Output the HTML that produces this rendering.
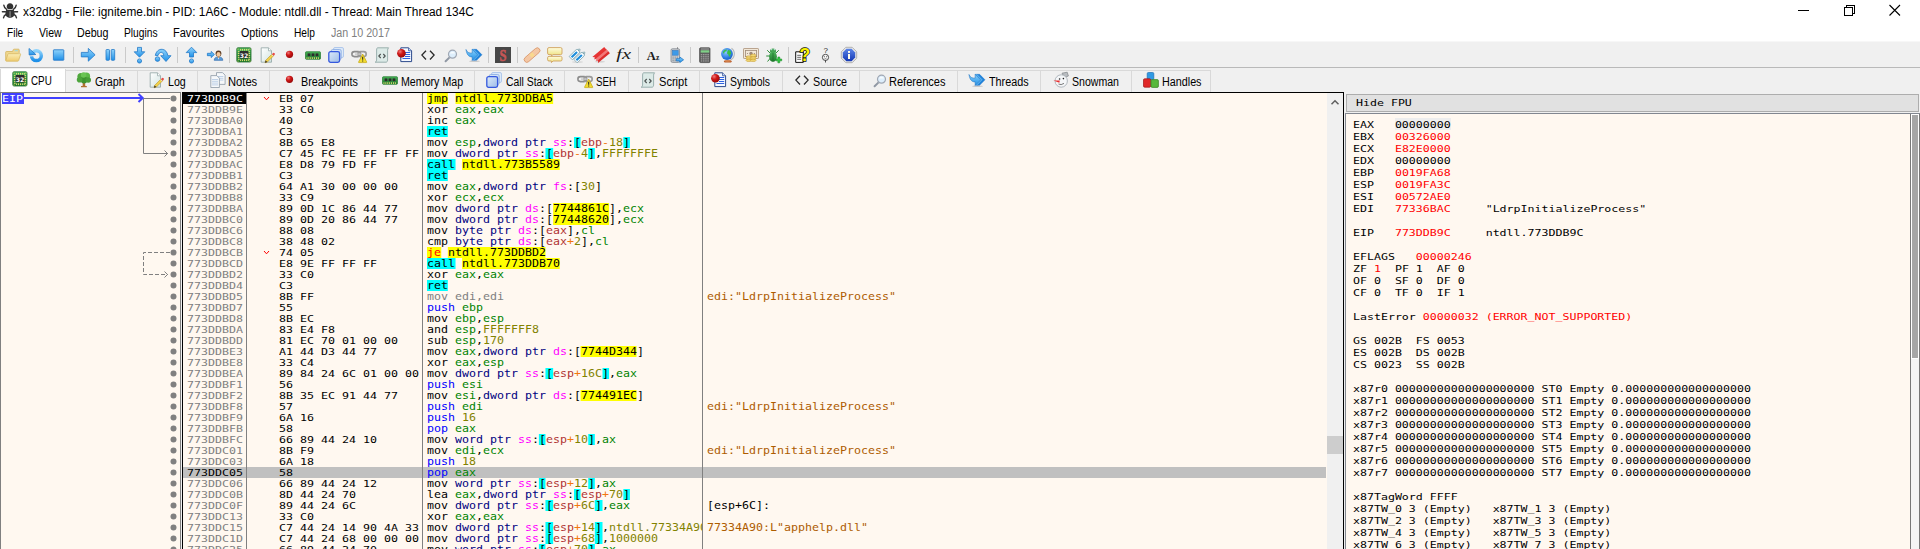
<!DOCTYPE html>
<html lang="en"><head><meta charset="utf-8"><title>x32dbg</title>
<style>
*{box-sizing:border-box}
html,body{margin:0;padding:0}
body{width:1920px;height:549px;overflow:hidden;position:relative;background:#F0F0F0;font-family:"Liberation Sans",sans-serif;font-size:12px;color:#000}
.abs,.u,.t,.ic{position:absolute}
.u{white-space:pre;line-height:14px;height:14px;transform-origin:0 0;font-size:12px}
.t{white-space:pre;font-family:"DejaVu Sans Mono","Liberation Mono",monospace;font-size:9.3px;line-height:11px;height:11px;transform-origin:0 0;transform:scaleX(1.25021)}
.tl{font-size:10.6px;transform:scaleX(1.09688)}
.tr{font-size:9.4px;transform:scaleX(1.23691)}
.t2{line-height:12px;height:12px}
.ic{overflow:visible}
.clip{position:absolute;overflow:hidden}
.g{color:#808080}.rd{color:#FF0000}
.pp{color:#0000FF}.cl{background:#00FFFF}.jm{background:#FFFF00}.jc{background:#FFFF00;color:#FF0000}
.r{color:#008300}.sz{color:#000080}.sg{color:#FF00FF}.bk{background:#00FFFF}
.br{color:#B03434}.op{color:#F27711}.v{color:#828200}.ad{background:#FFFF00}
.cm{color:#AE5C00}
.cl,.jm,.jc,.bk,.ad{display:inline-block;height:11px;line-height:11px;vertical-align:top}
</style></head><body>
<!-- chrome -->
<div class="abs" style="left:0px;top:0px;width:1920px;height:42px;background:#FFFFFF;"></div>
<div class="abs" style="left:0px;top:41px;width:1920px;height:1px;background:#F7F7F7;"></div>
<div class="u " style="left:23.00px;top:4.84px;transform:scaleX(0.9876);">x32dbg - File: igniteme.bin - PID: 1A6C - Module: ntdll.dll - Thread: Main Thread 134C</div>
<div class="u " style="left:7.00px;top:25.84px;transform:scaleX(0.8379);">File</div>
<div class="u " style="left:38.60px;top:25.84px;transform:scaleX(0.8762);">View</div>
<div class="u " style="left:77.00px;top:25.84px;transform:scaleX(0.8909);">Debug</div>
<div class="u " style="left:124.00px;top:25.84px;transform:scaleX(0.8512);">Plugins</div>
<div class="u " style="left:173.00px;top:25.84px;transform:scaleX(0.9193);">Favourites</div>
<div class="u " style="left:240.50px;top:25.84px;transform:scaleX(0.8947);">Options</div>
<div class="u " style="left:293.50px;top:25.84px;transform:scaleX(0.8510);">Help</div>
<div class="u " style="left:331.00px;top:25.84px;transform:scaleX(0.8932);color:#808080;">Jan 10 2017</div>
<svg class="ic" style="left:2px;top:3px;width:16px;height:16px" viewBox="0 0 16 16"><g fill="#333"><path d="M8 0.3c-2 0-3.3 1.6-3.3 3.4 0 .9.5 1.7 1.1 2.2h4.4c.6-.5 1.1-1.3 1.1-2.2C11.300 1.900 10 .3 8 .3z"/><path d="M4.300 6.700h7.400c.6 1 .9 2.300.9 3.600 0 2.900-2 4.600-4.600 4.600s-4.600-1.700-4.600-4.600c0-1.300.3-2.600.9-3.600z"/></g><path d="M7.600 8.300h.9v6.200h-.9z" fill="#aaa"/><g stroke="#333" stroke-width="1.400" fill="none" stroke-linecap="round"><path d="M4.600 6.300C2.800 5.300 2 4 1.800 2.200M11.400 6.300c1.800-1 2.600-2.300 2.800-4.100M3.400 8.700H.4M12.600 8.700h3M4 11.500c-1.500.6-2.200 1.600-2.500 3.300M12 11.500c1.500.6 2.200 1.600 2.500 3.300"/></g></svg>
<svg class="abs" style="left:1790px;top:0;width:130px;height:22px" viewBox="0 0 130 22"><g stroke="#000" stroke-width="1" fill="none" shape-rendering="crispEdges"><path d="M8 10.5h11"/><path d="M54.5 7.5h8v8h-8z"/><path d="M56.5 7.500v-2h8v8h-2"/></g><path d="M99.5 5l10.500 10.500M110 5l-10.500 10.500" stroke="#000" stroke-width="1.100" fill="none"/></svg>
<div class="abs" style="left:0px;top:67px;width:1920px;height:1px;background:#B9B9B9;"></div>
<!-- toolbar -->
<svg width="0" height="0" style="position:absolute"><defs>
<linearGradient id="gb" x1="0" y1="0" x2="0" y2="1"><stop offset="0" stop-color="#8FD3FB"/><stop offset="1" stop-color="#1E90E8"/></linearGradient>
<linearGradient id="gb2" x1="0" y1="0" x2="1" y2="1"><stop offset="0" stop-color="#9AD8FC"/><stop offset="1" stop-color="#1C86DE"/></linearGradient>
<linearGradient id="gf" x1="0" y1="0" x2="0" y2="1"><stop offset="0" stop-color="#FBEDB5"/><stop offset="1" stop-color="#EFCB6E"/></linearGradient>
<radialGradient id="gr" cx=".35" cy=".3" r=".8"><stop offset="0" stop-color="#EE7A7A"/><stop offset=".4" stop-color="#D01818"/><stop offset="1" stop-color="#8E0606"/></radialGradient>
<linearGradient id="gg" x1="0" y1="0" x2="0" y2="1"><stop offset="0" stop-color="#4CB85C"/><stop offset="1" stop-color="#1E7A2C"/></linearGradient>
<linearGradient id="gp" x1="0" y1="0" x2="1" y2="1"><stop offset="0" stop-color="#FFFFFF"/><stop offset="1" stop-color="#D2E4E2"/></linearGradient>
<linearGradient id="gy" x1="0" y1="0" x2="0" y2="1"><stop offset="0" stop-color="#FFFDE0"/><stop offset="1" stop-color="#EDE07A"/></linearGradient>
<radialGradient id="gl" cx=".4" cy=".35" r=".8"><stop offset="0" stop-color="#8EC8FF"/><stop offset=".6" stop-color="#2B7BE4"/><stop offset="1" stop-color="#1450B0"/></radialGradient>
<linearGradient id="gi" x1="0" y1="0" x2="0" y2="1"><stop offset="0" stop-color="#5B84E8"/><stop offset="1" stop-color="#1438B4"/></linearGradient>
<linearGradient id="gs" x1="0" y1="0" x2="1" y2="1"><stop offset="0" stop-color="#DCEBFA"/><stop offset="1" stop-color="#9DBBE6"/></linearGradient>
</defs></svg>
<svg class="ic" style="left:5.0px;top:46.5px;width:16px;height:16px" viewBox="0 0 16 16"><path d="M.7 13.400V5.200q0-.7.700-.7h6.200l.6-1.700q.2-.6.900-.6h4.400q.7 0 .7.700v3" fill="#F0D890" stroke="#D3B25C" stroke-width=".8"/><path d="M9.600 3.300h3.200v.9H9.600z" fill="#8FD8EE"/><path d="M.8 13.600l2-6.300q.2-.6.900-.6h11.400q.7 0 .5.700l-2 6.200q-.2.600-.9.600H1.400q-.7 0-.6-.6z" fill="url(#gf)" stroke="#D8B965" stroke-width=".8"/></svg>
<svg class="ic" style="left:28.0px;top:46.5px;width:16px;height:16px" viewBox="0 0 16 16"><circle cx="8.400" cy="8.700" r="4.900" fill="none" stroke="url(#gb)" stroke-width="3.500"/><path d="M.6 8.900l7.600-.6" stroke="#F0F0F0" stroke-width="1.300"/><path d="M1 1.500l.2 6.500 6.600-.5z" fill="url(#gb)" stroke="#2278C8" stroke-width=".8"/></svg>
<svg class="ic" style="left:51.0px;top:46.5px;width:16px;height:16px" viewBox="0 0 16 16"><rect x="2.400" y="2.800" width="10.400" height="10.400" rx=".5" fill="url(#gb)" stroke="#2A7CCB" stroke-width=".9"/></svg>
<div class="abs" style="left:73px;top:47px;width:1px;height:16px;background:#CACACA;"></div>
<svg class="ic" style="left:80.0px;top:46.5px;width:16px;height:16px" viewBox="0 0 16 16"><path d="M1.300 5.400h7V1.400l6.800 6.400-6.800 6.400V9.900h-7z" fill="url(#gb)" stroke="#2278C8" stroke-width=".8"/></svg>
<svg class="ic" style="left:103.0px;top:46.5px;width:16px;height:16px" viewBox="0 0 16 16"><rect x="3" y="2.500" width="3.500" height="10.800" rx=".8" fill="url(#gb)" stroke="#2278C8" stroke-width=".8"/><rect x="8.200" y="2.500" width="3.500" height="10.800" rx=".8" fill="url(#gb)" stroke="#2278C8" stroke-width=".8"/></svg>
<div class="abs" style="left:125px;top:47px;width:1px;height:16px;background:#CACACA;"></div>
<svg class="ic" style="left:132.0px;top:46.5px;width:16px;height:16px" viewBox="0 0 16 16"><path d="M5.500.4h4v4.400h3.300L7.500 10.200 2.200 4.800h3.300z" fill="url(#gb)" stroke="#2278C8" stroke-width=".8"/><circle cx="7.500" cy="14" r="2.100" fill="url(#gb)" stroke="#2278C8" stroke-width=".8"/></svg>
<svg class="ic" style="left:155.0px;top:46.5px;width:16px;height:16px" viewBox="0 0 16 16"><path d="M.3 8.400C1 4.600 3.800 2 7.200 2.300c3 .3 5 2.600 5.700 6.400H16l-5 5.800-5.300-5.800h3.100C8.500 6.800 7.700 5.600 6.600 5.400 5 5.200 3.600 6.400 3 8.600z" fill="url(#gb)" stroke="#2278C8" stroke-width=".8"/><circle cx="2.500" cy="12.100" r="2.300" fill="url(#gb)" stroke="#2278C8" stroke-width=".8"/></svg>
<div class="abs" style="left:177px;top:47px;width:1px;height:16px;background:#CACACA;"></div>
<svg class="ic" style="left:184.0px;top:46.5px;width:16px;height:16px" viewBox="0 0 16 16"><path d="M5.500 10V5.600H2.200L7.500.2l5.300 5.400H9.500V10z" fill="url(#gb)" stroke="#2278C8" stroke-width=".8"/><circle cx="7.500" cy="14" r="2.100" fill="url(#gb)" stroke="#2278C8" stroke-width=".8"/></svg>
<svg class="ic" style="left:207.0px;top:46.5px;width:16px;height:16px" viewBox="0 0 16 16"><path d="M.4 6.300h3.800V4.400l3.200 3.100-3.200 3.100V8.700H.4z" fill="url(#gb)" stroke="#2278C8" stroke-width=".8"/><path d="M7.200 13.300c0-2.200 1.600-3.400 4.300-3.400s4.300 1.200 4.300 3.400z" fill="#5B9BD8" stroke="#2E6CB0" stroke-width=".7"/><path d="M10.800 10l.7 2.800.7-2.800z" fill="#FFF"/><circle cx="11.500" cy="6.500" r="2.900" fill="#5A3A22"/><ellipse cx="11.500" cy="7.300" rx="2" ry="2.400" fill="#F3C79A"/><path d="M10.700 9.400h1.600v1.300h-1.600z" fill="#C8803C"/></svg>
<div class="abs" style="left:229px;top:47px;width:1px;height:16px;background:#CACACA;"></div>
<svg class="ic" style="left:236.0px;top:46.5px;width:16px;height:16px" viewBox="0 0 16 16"><rect x=".8" y=".8" width="14.200" height="14.200" rx="1.200" fill="url(#gg)" stroke="#1C6A28" stroke-width=".8"/><rect x="4.2" y="1.900" width=".9" height="1.700" fill="#F3E27A"/><rect x="4.2" y="12.400" width=".9" height="1.700" fill="#F3E27A"/><rect y="4.2" x="1.900" height=".9" width="1.700" fill="#F3E27A"/><rect y="4.2" x="12.400" height=".9" width="1.700" fill="#F3E27A"/><rect x="6.1" y="1.900" width=".9" height="1.700" fill="#F3E27A"/><rect x="6.1" y="12.400" width=".9" height="1.700" fill="#F3E27A"/><rect y="6.1" x="1.900" height=".9" width="1.700" fill="#F3E27A"/><rect y="6.1" x="12.400" height=".9" width="1.700" fill="#F3E27A"/><rect x="8.0" y="1.900" width=".9" height="1.700" fill="#F3E27A"/><rect x="8.0" y="12.400" width=".9" height="1.700" fill="#F3E27A"/><rect y="8.0" x="1.900" height=".9" width="1.700" fill="#F3E27A"/><rect y="8.0" x="12.400" height=".9" width="1.700" fill="#F3E27A"/><rect x="9.9" y="1.900" width=".9" height="1.700" fill="#F3E27A"/><rect x="9.9" y="12.400" width=".9" height="1.700" fill="#F3E27A"/><rect y="9.9" x="1.900" height=".9" width="1.700" fill="#F3E27A"/><rect y="9.9" x="12.400" height=".9" width="1.700" fill="#F3E27A"/><rect x="11.8" y="1.900" width=".9" height="1.700" fill="#F3E27A"/><rect x="11.8" y="12.400" width=".9" height="1.700" fill="#F3E27A"/><rect y="11.8" x="1.900" height=".9" width="1.700" fill="#F3E27A"/><rect y="11.8" x="12.400" height=".9" width="1.700" fill="#F3E27A"/><circle cx="2" cy="2" r=".6" fill="#F3E27A"/><circle cx="14" cy="2" r=".6" fill="#F3E27A"/><circle cx="2" cy="14" r=".6" fill="#F3E27A"/><circle cx="14" cy="14" r=".6" fill="#F3E27A"/><rect x="3.600" y="4" width="8.800" height="7.600" rx=".8" fill="#2E2E2E"/><text x="8" y="10.500" text-anchor="middle" font-family="DejaVu Sans,sans-serif" font-weight="bold" font-size="6.200" fill="#FFF">32</text></svg>
<svg class="ic" style="left:259.0px;top:46.5px;width:16px;height:16px" viewBox="0 0 16 16"><path d="M2.200.8h7.300l3 3v11.400H2.200z" fill="url(#gp)" stroke="#8FA3A3" stroke-width=".8"/><path d="M9.500.8v3h3" fill="#FFF" stroke="#8FA3A3" stroke-width=".7"/><path d="M6.600 13.400L13 7l1.700 1.700-6.400 6.400-2.300.7z" fill="#F2D24A" stroke="#B8962A" stroke-width=".6"/><path d="M13 7l1.100-1.100q.5-.5 1 0l.7.700q.5.500 0 1L14.700 8.700z" fill="#E84848"/><path d="M12.500 7.500l1.700 1.700" stroke="#DDD" stroke-width=".9"/><path d="M6.600 13.400l-.6 2.400 2.300-.7z" fill="#2A2A2A"/></svg>
<svg class="ic" style="left:282.0px;top:46.5px;width:16px;height:16px" viewBox="0 0 16 16"><circle cx="7.500" cy="7.300" r="3.600" fill="url(#gr)"/></svg>
<svg class="ic" style="left:305.0px;top:46.5px;width:16px;height:16px" viewBox="0 0 16 16"><rect x=".6" y="4.800" width="14.800" height="7.400" rx=".6" fill="url(#gg)" stroke="#1F7A2C" stroke-width=".8"/><rect x="2.600" y="6.400" width="2.800" height="2.800" fill="#2B2B2B"/><rect x="6.600" y="6.400" width="2.800" height="2.800" fill="#2B2B2B"/><rect x="10.600" y="6.400" width="2.800" height="2.800" fill="#2B2B2B"/><rect x="1.5" y="10.300" width=".9" height="1.600" fill="#F3E27A"/><rect x="3.4" y="10.300" width=".9" height="1.600" fill="#F3E27A"/><rect x="5.3" y="10.300" width=".9" height="1.600" fill="#F3E27A"/><rect x="7.2" y="10.300" width=".9" height="1.600" fill="#F3E27A"/><rect x="9.1" y="10.300" width=".9" height="1.600" fill="#F3E27A"/><rect x="11.0" y="10.300" width=".9" height="1.600" fill="#F3E27A"/><rect x="12.9" y="10.300" width=".9" height="1.600" fill="#F3E27A"/></svg>
<svg class="ic" style="left:328.0px;top:46.5px;width:16px;height:16px" viewBox="0 0 16 16"><rect x="5.500" y=".5" width="10" height="10" rx="1.500" fill="#DCE9F8" stroke="#A9C4EA" stroke-width=".9"/><rect x="3.200" y="2.500" width="10" height="10" rx="1.500" fill="#D3E3F6" stroke="#8FB0E4" stroke-width=".9"/><rect x=".8" y="4.600" width="10.800" height="10.800" rx="1.800" fill="url(#gs)" stroke="#3458DE" stroke-width="1.300"/></svg>
<svg class="ic" style="left:351.0px;top:46.5px;width:16px;height:16px" viewBox="0 0 16 16"><rect x=".9" y="4.600" width="8.600" height="5" rx="2.500" fill="none" stroke="#8C8C8C" stroke-width="1.600"/><rect x="7" y="4.600" width="8.200" height="5" rx="2.500" fill="none" stroke="#9A9A9A" stroke-width="1.600"/><path d="M4 7.100h7" stroke="#C4C4C4" stroke-width="1.300"/><path d="M11.700 7l4 8q.3.600-.4.600H8q-.7 0-.4-.6z" fill="#F2DC2E" stroke="#C2A410" stroke-width=".7"/><path d="M11.200 9.700h1v3h-1zM11.200 13.400h1v1h-1z" fill="#222"/></svg>
<svg class="ic" style="left:374.0px;top:46.5px;width:16px;height:16px" viewBox="0 0 16 16"><path d="M3.400.8h11.200q-1 1-1 2.400v10q0 1.500-1.300 2H1.200q1.400-.6 1.400-2V3q0-1.500.8-2.200z" fill="#DCEAE7" stroke="#86A09E" stroke-width=".8"/><path d="M6.700 7L4.800 9l1.900 2M9.300 7l1.900 2-1.900 2" fill="none" stroke="#4A5050" stroke-width="1.100"/></svg>
<svg class="ic" style="left:397.0px;top:46.5px;width:16px;height:16px" viewBox="0 0 16 16"><path d="M3.800.8h7.800l3 3v10.800H3.800z" fill="#F4F8FF" stroke="#2C4A8C" stroke-width="1"/><path d="M11.600.8v3h3" fill="#CFE0FF" stroke="#2C4A8C" stroke-width=".8"/><path d="M8 5.500h5.200M8 7.500h5.200M8 9.500h5.200M5.500 11.500h7.700" stroke="#2E62E0" stroke-width="1"/><circle cx="4.400" cy="6.300" r="4.300" fill="url(#gr)"/></svg>
<svg class="ic" style="left:420.0px;top:46.5px;width:16px;height:16px" viewBox="0 0 16 16"><path d="M6 3.700L1.900 8.100 6 12.500M10 3.700l4.100 4.400L10 12.500" fill="none" stroke="#2A2A2A" stroke-width="1.300"/></svg>
<svg class="ic" style="left:443.0px;top:46.5px;width:16px;height:16px" viewBox="0 0 16 16"><path d="M6.300 10.600L2.600 14.200" stroke="#9098A4" stroke-width="2" stroke-linecap="round"/><circle cx="9.500" cy="7.200" r="4" fill="#DDEEFC" stroke="#A0A8B4" stroke-width="1.200"/><path d="M6.800 6.500A2.900 2.900 0 0 1 12.200 6.500z" fill="#FFF" opacity=".8"/></svg>
<svg class="ic" style="left:466.0px;top:46.5px;width:16px;height:16px" viewBox="0 0 16 16"><ellipse cx="8.500" cy="14.300" rx="5.500" ry=".8" fill="#B8B8B8" opacity=".7"/><path d="M10.600 2.300L16 7.800l-5.400 5.500H8.200l5.400-5.500-5.400-5.500z" fill="#1C84DE" stroke="#1C6CC0" stroke-width=".4"/><path d="M8.400 2.300l5.400 5.500-5.400 5.500H6.200l5.400-5.500-5.400-5.500z" fill="#4FB0F6" stroke="#1C6CC0" stroke-width=".4"/><path d="M0 2.500C1.200 5.600 3.400 6.300 6.200 6.100V2.300l5.400 5.500-5.400 5.500V9.900C2.800 10.100.7 7.600 0 2.500z" fill="url(#gb)" stroke="#2278C8" stroke-width=".6"/></svg>
<div class="abs" style="left:488px;top:47px;width:1px;height:16px;background:#CACACA;"></div>
<svg class="ic" style="left:495.0px;top:46.5px;width:16px;height:16px" viewBox="0 0 16 16"><rect x="0" y="0" width="16" height="16" fill="#474747"/><text transform="translate(8 13.600) scale(.74 1)" text-anchor="middle" font-family="Liberation Serif,serif" font-weight="bold" font-size="17" fill="#C65656" stroke="#C65656" stroke-width=".6">S</text></svg>
<div class="abs" style="left:517px;top:47px;width:1px;height:16px;background:#CACACA;"></div>
<svg class="ic" style="left:524.0px;top:46.5px;width:16px;height:16px" viewBox="0 0 16 16"><rect x="-1.600" y="5.400" width="19.200" height="5.400" rx="2.700" transform="rotate(-41 8 8)" fill="#F4C7A4" stroke="#D9976A" stroke-width=".8"/><rect x="6" y="6" width="4" height="4" transform="rotate(-41 8 8)" fill="#F9D98E"/></svg>
<svg class="ic" style="left:547.0px;top:46.5px;width:16px;height:16px" viewBox="0 0 16 16"><path d="M2 .6h11.600q1.400 0 1.400 1.400v4.200q0 1.400-1.400 1.400H6l-1.600 1.500V7.600H2Q.6 7.600.6 6.200V2Q.6.6 2 .6z" fill="url(#gy)" stroke="#CFA25E" stroke-width=".9"/><path d="M2 9.400h11.600q1.400 0 1.400 1.300v2q0 1.300-1.400 1.300H6l-1.600 1.600V14H2q-1.400 0-1.400-1.300v-2q0-1.300 1.400-1.300z" fill="url(#gy)" stroke="#CFA25E" stroke-width=".9"/></svg>
<svg class="ic" style="left:570.0px;top:46.5px;width:16px;height:16px" viewBox="0 0 16 16"><ellipse cx="7.500" cy="15" rx="5.500" ry=".7" fill="#C4C4C4" opacity=".7"/><g transform="translate(5.4 6.6) rotate(-44)"><path d="M-6.500 -2.300h9.800l3.200 2.300-3.200 2.300h-9.800z" fill="#FFF" stroke="#7FA6B0" stroke-width=".8"/><rect x="-5.300" y="-1.100" width="7.600" height="2.200" fill="#1E8EDC"/><circle cx="4.400" cy="0" r=".7" fill="#7FA6B0"/></g><g transform="translate(10.2 9.6) rotate(-44)"><path d="M-6.500 -2.300h9.800l3.200 2.300-3.200 2.300h-9.800z" fill="#FFF" stroke="#7FA6B0" stroke-width=".8"/><rect x="-5.300" y="-1.100" width="7.600" height="2.200" fill="#1E8EDC"/><circle cx="4.400" cy="0" r=".7" fill="#7FA6B0"/></g></svg>
<svg class="ic" style="left:593.0px;top:46.5px;width:16px;height:16px" viewBox="0 0 16 16"><ellipse cx="7" cy="14.800" rx="5" ry=".7" fill="#C4C4C4" opacity=".7"/><g transform="translate(10 9.6) rotate(-40)"><path d="M-8 -1.800H7.500V1.800H-8l1.600-1.800z" fill="#DC2C2C"/></g><g transform="translate(8.4 7.9) rotate(-40)"><path d="M-8 -1.800H7.500V1.800H-8l1.600-1.800z" fill="#F27878"/></g><g transform="translate(6.6 6.2) rotate(-40)"><path d="M-8 -1.800H7.500V1.800H-8l1.600-1.800z" fill="#E63434"/></g></svg>
<svg class="ic" style="left:616.0px;top:46.5px;width:16px;height:16px" viewBox="0 0 16 16"><text x=".2" y="12.300" font-family="Liberation Serif,serif" font-style="italic" font-size="15" fill="#1A1A1A" textLength="14.800" lengthAdjust="spacingAndGlyphs">fx</text></svg>
<div class="abs" style="left:638px;top:47px;width:1px;height:16px;background:#CACACA;"></div>
<svg class="ic" style="left:645.0px;top:46.5px;width:16px;height:16px" viewBox="0 0 16 16"><text x="1.700" y="12.600" font-family="Liberation Serif,serif" font-weight="bold" font-size="12.500" fill="#1A1A1A">A</text><text x="11" y="12.600" font-family="Liberation Serif,serif" font-weight="bold" font-size="7.500" fill="#1A1A1A">z</text></svg>
<svg class="ic" style="left:668.0px;top:46.5px;width:16px;height:16px" viewBox="0 0 16 16"><path d="M9.500.4v2" stroke="#555" stroke-width=".8"/><rect x="3" y="1.800" width="8.600" height="13.600" rx="1.400" fill="#C9CDD2" stroke="#7E848C" stroke-width=".8"/><rect x="4.400" y="3.400" width="5.800" height="4.800" fill="#3C9AE8" stroke="#2B6FB8" stroke-width=".5"/><rect x="4.5" y="9.6" width="1.200" height="1" fill="#7E848C"/><rect x="6.6" y="9.6" width="1.200" height="1" fill="#7E848C"/><rect x="8.7" y="9.6" width="1.200" height="1" fill="#7E848C"/><rect x="4.5" y="11.4" width="1.200" height="1" fill="#7E848C"/><rect x="6.6" y="11.4" width="1.200" height="1" fill="#7E848C"/><rect x="8.7" y="11.4" width="1.200" height="1" fill="#7E848C"/><rect x="4.5" y="13.2" width="1.200" height="1" fill="#7E848C"/><rect x="6.6" y="13.2" width="1.200" height="1" fill="#7E848C"/><rect x="8.7" y="13.2" width="1.200" height="1" fill="#7E848C"/><path d="M8.300 11.700h3.500V10l3.800 2.800-3.800 2.800v-1.700H8.300z" fill="url(#gb)" stroke="#2278C8" stroke-width=".8"/></svg>
<div class="abs" style="left:690px;top:47px;width:1px;height:16px;background:#CACACA;"></div>
<svg class="ic" style="left:697.0px;top:46.5px;width:16px;height:16px" viewBox="0 0 16 16"><rect x="2.600" y=".8" width="10.400" height="14.800" rx="1" fill="#5E5E5E" stroke="#444" stroke-width=".7"/><path d="M3.800 2h8.400" stroke="#B8B8B8" stroke-width=".8"/><rect x="3.700" y="3.300" width="8.600" height="2.300" fill="#7FD087"/><rect x="3.8" y="7.0" width="1.500" height="1.300" fill="#9C9C9C"/><rect x="6.0" y="7.0" width="1.500" height="1.300" fill="#9C9C9C"/><rect x="8.2" y="7.0" width="1.500" height="1.300" fill="#9C9C9C"/><rect x="10.4" y="7.0" width="1.500" height="1.300" fill="#9C9C9C"/><rect x="3.8" y="9.1" width="1.500" height="1.300" fill="#9C9C9C"/><rect x="6.0" y="9.1" width="1.500" height="1.300" fill="#9C9C9C"/><rect x="8.2" y="9.1" width="1.500" height="1.300" fill="#9C9C9C"/><rect x="10.4" y="9.1" width="1.500" height="1.300" fill="#9C9C9C"/><rect x="3.8" y="11.2" width="1.500" height="1.300" fill="#9C9C9C"/><rect x="6.0" y="11.2" width="1.500" height="1.300" fill="#9C9C9C"/><rect x="8.2" y="11.2" width="1.500" height="1.300" fill="#9C9C9C"/><rect x="10.4" y="11.2" width="1.500" height="1.300" fill="#9C9C9C"/><rect x="3.8" y="13.3" width="1.500" height="1.300" fill="#9C9C9C"/><rect x="6.0" y="13.3" width="1.500" height="1.300" fill="#9C9C9C"/><rect x="8.2" y="13.3" width="1.500" height="1.300" fill="#9C9C9C"/><rect x="10.4" y="13.3" width="1.500" height="1.300" fill="#9C9C9C"/></svg>
<svg class="ic" style="left:720.0px;top:46.5px;width:16px;height:16px" viewBox="0 0 16 16"><path d="M11.500 1.200A7 7 0 0 1 9.500 13.500" fill="none" stroke="#B4B8BC" stroke-width="1.100"/><circle cx="7" cy="7" r="5.900" fill="url(#gl)"/><path d="M3.200 4.200q1.600-2 3.600-1.600l-.4 1.600-1.800.6-.4 1.800-1.200-.4zM8.200 3l2.400.8.800 2.600-1.400 1.600.6 1.400-1.600.2-.6-2.200-1.400-1 .4-2z" fill="#38C048"/><ellipse cx="7.800" cy="14.400" rx="4" ry="1.200" fill="#B85A28"/><ellipse cx="7.800" cy="14" rx="3.400" ry=".7" fill="#D98850"/></svg>
<svg class="ic" style="left:743.0px;top:46.5px;width:16px;height:16px" viewBox="0 0 16 16"><rect x=".5" y="1.500" width="15" height="10" rx=".6" fill="#F1E7D8" stroke="#B39C84" stroke-width=".9"/><rect x="2.400" y="3.400" width="11.200" height="6.200" fill="none" stroke="#9E8A78" stroke-width=".8"/><circle cx="8" cy="6.500" r="1.700" fill="#9E8A78"/><circle cx="4.500" cy="6.500" r=".6" fill="#9E8A78"/><circle cx="11.500" cy="6.500" r=".6" fill="#9E8A78"/><ellipse cx="5.8" cy="13.4" rx="2.800" ry="1.100" fill="#F6DE7E" stroke="#C89A28" stroke-width=".6"/><ellipse cx="5.8" cy="11.7" rx="2.800" ry="1.100" fill="#F6DE7E" stroke="#C89A28" stroke-width=".6"/><ellipse cx="5.8" cy="10.0" rx="2.800" ry="1.100" fill="#F6DE7E" stroke="#C89A28" stroke-width=".6"/><ellipse cx="10.2" cy="13.4" rx="2.800" ry="1.100" fill="#F6DE7E" stroke="#C89A28" stroke-width=".6"/><ellipse cx="10.2" cy="11.7" rx="2.800" ry="1.100" fill="#F6DE7E" stroke="#C89A28" stroke-width=".6"/><ellipse cx="10.2" cy="10.0" rx="2.800" ry="1.100" fill="#F6DE7E" stroke="#C89A28" stroke-width=".6"/><ellipse cx="10.2" cy="8.3" rx="2.800" ry="1.100" fill="#F6DE7E" stroke="#C89A28" stroke-width=".6"/></svg>
<svg class="ic" style="left:766.0px;top:46.5px;width:16px;height:16px" viewBox="0 0 16 16"><g stroke="#2E8B3A" stroke-width="1" fill="none" stroke-linecap="round"><path d="M4 6L1.500 3.500M10 6l2.500-2.500M3.600 9H.6M4 11.500l-2.200 2.700"/></g><ellipse cx="7" cy="4" rx="3" ry="2.600" fill="#3FA04C"/><circle cx="5.700" cy="2.700" r=".6" fill="#D8F4FF"/><circle cx="8.300" cy="2.700" r=".6" fill="#D8F4FF"/><ellipse cx="7" cy="9.600" rx="3.900" ry="5.200" fill="url(#gg)"/><path d="M7 5.500v9" stroke="#1C6A28" stroke-width=".7"/><path d="M11.900 10h1.800v2h2v1.800h-2v2h-1.800v-2h-2V12h2z" fill="#2FCB3F" stroke="#168A24" stroke-width=".6"/></svg>
<div class="abs" style="left:788px;top:47px;width:1px;height:16px;background:#CACACA;"></div>
<svg class="ic" style="left:795.0px;top:46.5px;width:16px;height:16px" viewBox="0 0 16 16"><path d="M.7 4.800h7.600v10.600H.7z" fill="#FFF" stroke="#111" stroke-width="1"/><path d="M2.200 8.300h4M2.200 10.300h4M2.200 12.300h4" stroke="#555" stroke-width=".9"/><text x="4.600" y="13.800" font-family="Liberation Sans,sans-serif" font-weight="bold" font-size="17.500" fill="#F8F000" stroke="#111" stroke-width="1.500" paint-order="stroke">?</text></svg>
<svg class="ic" style="left:818.0px;top:46.5px;width:16px;height:16px" viewBox="0 0 16 16"><text x="5.500" y="6.300" font-family="Liberation Sans,sans-serif" font-size="8" fill="#222">?</text><circle cx="7.500" cy="10.400" r="3.100" fill="#FAFAFA" stroke="#222" stroke-width=".8"/><circle cx="6.400" cy="9.800" r=".5" fill="#222"/><circle cx="8.600" cy="9.800" r=".5" fill="#222"/><path d="M6.600 11.800h1.800" stroke="#222" stroke-width=".6"/><path d="M7.500 13.500v2" stroke="#222" stroke-width=".8"/></svg>
<svg class="ic" style="left:841.0px;top:46.5px;width:16px;height:16px" viewBox="0 0 16 16"><path d="M4.800.3h6.400l4.500 4.500v6.400l-4.500 4.500H4.800L.3 11.200V4.800z" fill="#E8E8E8" stroke="#9A9A9A" stroke-width=".7"/><path d="M5.400 1.800h5.200l3.600 3.600v5.200l-3.600 3.600H5.400L1.800 10.600V5.400z" fill="url(#gi)"/><rect x="7" y="7" width="2" height="5" fill="#FFFBE8"/><rect x="7" y="4" width="2" height="1.900" fill="#FFFBE8"/></svg>
<!-- tabs -->
<div class="abs" style="left:65px;top:70px;width:1146px;height:1px;background:#D9D9D9;"></div>
<div class="abs" style="left:137px;top:71px;width:1px;height:21px;background:#D9D9D9;"></div>
<div class="abs" style="left:197px;top:71px;width:1px;height:21px;background:#D9D9D9;"></div>
<div class="abs" style="left:269px;top:71px;width:1px;height:21px;background:#D9D9D9;"></div>
<div class="abs" style="left:369px;top:71px;width:1px;height:21px;background:#D9D9D9;"></div>
<div class="abs" style="left:474px;top:71px;width:1px;height:21px;background:#D9D9D9;"></div>
<div class="abs" style="left:564px;top:71px;width:1px;height:21px;background:#D9D9D9;"></div>
<div class="abs" style="left:628px;top:71px;width:1px;height:21px;background:#D9D9D9;"></div>
<div class="abs" style="left:699px;top:71px;width:1px;height:21px;background:#D9D9D9;"></div>
<div class="abs" style="left:782px;top:71px;width:1px;height:21px;background:#D9D9D9;"></div>
<div class="abs" style="left:859px;top:71px;width:1px;height:21px;background:#D9D9D9;"></div>
<div class="abs" style="left:957px;top:71px;width:1px;height:21px;background:#D9D9D9;"></div>
<div class="abs" style="left:1040px;top:71px;width:1px;height:21px;background:#D9D9D9;"></div>
<div class="abs" style="left:1131px;top:71px;width:1px;height:21px;background:#D9D9D9;"></div>
<div class="abs" style="left:1210px;top:71px;width:1px;height:21px;background:#D9D9D9;"></div>
<div class="abs" style="left:0px;top:69px;width:66px;height:23px;background:#FFFFFF;border-left:1px solid #D9D9D9;border-right:1px solid #D9D9D9;"></div>
<svg class="ic" style="left:11.6px;top:70.5px;width:16px;height:16px" viewBox="0 0 16 16"><rect x=".8" y=".8" width="14.200" height="14.200" rx="1.200" fill="url(#gg)" stroke="#1C6A28" stroke-width=".8"/><rect x="4.2" y="1.900" width=".9" height="1.700" fill="#F3E27A"/><rect x="4.2" y="12.400" width=".9" height="1.700" fill="#F3E27A"/><rect y="4.2" x="1.900" height=".9" width="1.700" fill="#F3E27A"/><rect y="4.2" x="12.400" height=".9" width="1.700" fill="#F3E27A"/><rect x="6.1" y="1.900" width=".9" height="1.700" fill="#F3E27A"/><rect x="6.1" y="12.400" width=".9" height="1.700" fill="#F3E27A"/><rect y="6.1" x="1.900" height=".9" width="1.700" fill="#F3E27A"/><rect y="6.1" x="12.400" height=".9" width="1.700" fill="#F3E27A"/><rect x="8.0" y="1.900" width=".9" height="1.700" fill="#F3E27A"/><rect x="8.0" y="12.400" width=".9" height="1.700" fill="#F3E27A"/><rect y="8.0" x="1.900" height=".9" width="1.700" fill="#F3E27A"/><rect y="8.0" x="12.400" height=".9" width="1.700" fill="#F3E27A"/><rect x="9.9" y="1.900" width=".9" height="1.700" fill="#F3E27A"/><rect x="9.9" y="12.400" width=".9" height="1.700" fill="#F3E27A"/><rect y="9.9" x="1.900" height=".9" width="1.700" fill="#F3E27A"/><rect y="9.9" x="12.400" height=".9" width="1.700" fill="#F3E27A"/><rect x="11.8" y="1.900" width=".9" height="1.700" fill="#F3E27A"/><rect x="11.8" y="12.400" width=".9" height="1.700" fill="#F3E27A"/><rect y="11.8" x="1.900" height=".9" width="1.700" fill="#F3E27A"/><rect y="11.8" x="12.400" height=".9" width="1.700" fill="#F3E27A"/><circle cx="2" cy="2" r=".6" fill="#F3E27A"/><circle cx="14" cy="2" r=".6" fill="#F3E27A"/><circle cx="2" cy="14" r=".6" fill="#F3E27A"/><circle cx="14" cy="14" r=".6" fill="#F3E27A"/><rect x="3.600" y="4" width="8.800" height="7.600" rx=".8" fill="#2E2E2E"/><text x="8" y="10.500" text-anchor="middle" font-family="DejaVu Sans,sans-serif" font-weight="bold" font-size="6.200" fill="#FFF">32</text></svg>
<div class="u " style="left:30.90px;top:73.84px;transform:scaleX(0.8210);">CPU</div>
<svg class="ic" style="left:75.8px;top:72px;width:16px;height:16px" viewBox="0 0 16 16"><path d="M6.800 9.500h2.200l.3 4.600h1.500v1.200H5v-1.200h1.600z" fill="#B07030"/><circle cx="5" cy="4.600" r="3.600" fill="#4FA83C"/><circle cx="10.400" cy="4.200" r="3.700" fill="#5CB848"/><circle cx="8" cy="8" r="3.400" fill="#3E9430"/><circle cx="3.600" cy="7.800" r="2.800" fill="#4CA43C"/><circle cx="12.200" cy="8" r="2.800" fill="#479E38"/><circle cx="7.600" cy="3" r="2.800" fill="#6AC454"/></svg>
<div class="u " style="left:94.90px;top:74.84px;transform:scaleX(0.8875);">Graph</div>
<svg class="ic" style="left:148.2px;top:72px;width:16px;height:16px" viewBox="0 0 16 16"><path d="M2.200.8h7.300l3 3v11.400H2.200z" fill="url(#gp)" stroke="#8FA3A3" stroke-width=".8"/><path d="M9.500.8v3h3" fill="#FFF" stroke="#8FA3A3" stroke-width=".7"/><path d="M6.600 13.400L13 7l1.700 1.700-6.400 6.400-2.300.7z" fill="#F2D24A" stroke="#B8962A" stroke-width=".6"/><path d="M13 7l1.100-1.100q.5-.5 1 0l.7.700q.5.500 0 1L14.700 8.700z" fill="#E84848"/><path d="M12.500 7.500l1.700 1.700" stroke="#DDD" stroke-width=".9"/><path d="M6.600 13.400l-.6 2.400 2.300-.7z" fill="#2A2A2A"/></svg>
<div class="u " style="left:167.70px;top:74.84px;transform:scaleX(0.8891);">Log</div>
<svg class="ic" style="left:209.8px;top:72px;width:16px;height:16px" viewBox="0 0 16 16"><path d="M6.500.6h6l2.600 2.600v9.200H6.500z" fill="#F6F8FA" stroke="#8C98A4" stroke-width=".8"/><path d="M7.800 4.500h5.600M7.800 6.300h5.600M7.800 8.100h5.600" stroke="#A8C0E0" stroke-width=".7"/><path d="M.8 3.600h6l2.600 2.600v9.300H.8z" fill="#F6F8FA" stroke="#8C98A4" stroke-width=".8"/><path d="M2 7.500h6M2 9.300h6M2 11.100h6M2 12.900h6" stroke="#A8C0E0" stroke-width=".7"/></svg>
<div class="u " style="left:228.30px;top:74.84px;transform:scaleX(0.9315);">Notes</div>
<svg class="ic" style="left:282.2px;top:72px;width:16px;height:16px" viewBox="0 0 16 16"><circle cx="7.500" cy="7.300" r="3.600" fill="url(#gr)"/></svg>
<div class="u " style="left:300.70px;top:74.84px;transform:scaleX(0.8995);">Breakpoints</div>
<svg class="ic" style="left:381.6px;top:72px;width:16px;height:16px" viewBox="0 0 16 16"><rect x=".6" y="4.800" width="14.800" height="7.400" rx=".6" fill="url(#gg)" stroke="#1F7A2C" stroke-width=".8"/><rect x="2.600" y="6.400" width="2.800" height="2.800" fill="#2B2B2B"/><rect x="6.600" y="6.400" width="2.800" height="2.800" fill="#2B2B2B"/><rect x="10.600" y="6.400" width="2.800" height="2.800" fill="#2B2B2B"/><rect x="1.5" y="10.300" width=".9" height="1.600" fill="#F3E27A"/><rect x="3.4" y="10.300" width=".9" height="1.600" fill="#F3E27A"/><rect x="5.3" y="10.300" width=".9" height="1.600" fill="#F3E27A"/><rect x="7.2" y="10.300" width=".9" height="1.600" fill="#F3E27A"/><rect x="9.1" y="10.300" width=".9" height="1.600" fill="#F3E27A"/><rect x="11.0" y="10.300" width=".9" height="1.600" fill="#F3E27A"/><rect x="12.9" y="10.300" width=".9" height="1.600" fill="#F3E27A"/></svg>
<div class="u " style="left:400.70px;top:74.84px;transform:scaleX(0.8869);">Memory Map</div>
<svg class="ic" style="left:486.4px;top:72px;width:16px;height:16px" viewBox="0 0 16 16"><rect x="5.500" y=".5" width="10" height="10" rx="1.500" fill="#DCE9F8" stroke="#A9C4EA" stroke-width=".9"/><rect x="3.200" y="2.500" width="10" height="10" rx="1.500" fill="#D3E3F6" stroke="#8FB0E4" stroke-width=".9"/><rect x=".8" y="4.600" width="10.800" height="10.800" rx="1.800" fill="url(#gs)" stroke="#3458DE" stroke-width="1.300"/></svg>
<div class="u " style="left:506.20px;top:74.84px;transform:scaleX(0.8664);">Call Stack</div>
<svg class="ic" style="left:576.6px;top:72px;width:16px;height:16px" viewBox="0 0 16 16"><rect x=".9" y="4.600" width="8.600" height="5" rx="2.500" fill="none" stroke="#8C8C8C" stroke-width="1.600"/><rect x="7" y="4.600" width="8.200" height="5" rx="2.500" fill="none" stroke="#9A9A9A" stroke-width="1.600"/><path d="M4 7.100h7" stroke="#C4C4C4" stroke-width="1.300"/><path d="M11.700 7l4 8q.3.600-.4.600H8q-.7 0-.4-.6z" fill="#F2DC2E" stroke="#C2A410" stroke-width=".7"/><path d="M11.200 9.700h1v3h-1zM11.200 13.400h1v1h-1z" fill="#222"/></svg>
<div class="u " style="left:595.90px;top:74.84px;transform:scaleX(0.8065);">SEH</div>
<svg class="ic" style="left:640px;top:72px;width:16px;height:16px" viewBox="0 0 16 16"><path d="M3.400.8h11.200q-1 1-1 2.400v10q0 1.500-1.300 2H1.200q1.400-.6 1.400-2V3q0-1.500.8-2.200z" fill="#DCEAE7" stroke="#86A09E" stroke-width=".8"/><path d="M6.700 7L4.800 9l1.900 2M9.300 7l1.900 2-1.900 2" fill="none" stroke="#4A5050" stroke-width="1.100"/></svg>
<div class="u " style="left:658.80px;top:74.84px;transform:scaleX(0.9226);">Script</div>
<svg class="ic" style="left:711px;top:72px;width:16px;height:16px" viewBox="0 0 16 16"><path d="M3.800.8h7.800l3 3v10.800H3.800z" fill="#F4F8FF" stroke="#2C4A8C" stroke-width="1"/><path d="M11.600.8v3h3" fill="#CFE0FF" stroke="#2C4A8C" stroke-width=".8"/><path d="M8 5.500h5.200M8 7.500h5.200M8 9.500h5.200M5.500 11.500h7.700" stroke="#2E62E0" stroke-width="1"/><circle cx="4.400" cy="6.300" r="4.300" fill="url(#gr)"/></svg>
<div class="u " style="left:729.90px;top:74.84px;transform:scaleX(0.8693);">Symbols</div>
<svg class="ic" style="left:794px;top:72px;width:16px;height:16px" viewBox="0 0 16 16"><path d="M6 3.700L1.900 8.100 6 12.500M10 3.700l4.100 4.400L10 12.500" fill="none" stroke="#2A2A2A" stroke-width="1.300"/></svg>
<div class="u " style="left:812.90px;top:74.84px;transform:scaleX(0.8942);">Source</div>
<svg class="ic" style="left:872px;top:72px;width:16px;height:16px" viewBox="0 0 16 16"><path d="M6.300 10.600L2.600 14.200" stroke="#9098A4" stroke-width="2" stroke-linecap="round"/><circle cx="9.500" cy="7.200" r="4" fill="#DDEEFC" stroke="#A0A8B4" stroke-width="1.200"/><path d="M6.800 6.500A2.900 2.900 0 0 1 12.200 6.500z" fill="#FFF" opacity=".8"/></svg>
<div class="u " style="left:889.30px;top:74.84px;transform:scaleX(0.9207);">References</div>
<svg class="ic" style="left:969.4px;top:72px;width:16px;height:16px" viewBox="0 0 16 16"><ellipse cx="8.500" cy="14.300" rx="5.500" ry=".8" fill="#B8B8B8" opacity=".7"/><path d="M10.600 2.300L16 7.800l-5.400 5.500H8.200l5.400-5.500-5.400-5.500z" fill="#1C84DE" stroke="#1C6CC0" stroke-width=".4"/><path d="M8.400 2.300l5.400 5.500-5.400 5.500H6.200l5.400-5.500-5.400-5.500z" fill="#4FB0F6" stroke="#1C6CC0" stroke-width=".4"/><path d="M0 2.500C1.200 5.600 3.400 6.300 6.200 6.100V2.300l5.400 5.500-5.400 5.500V9.900C2.800 10.100.7 7.600 0 2.500z" fill="url(#gb)" stroke="#2278C8" stroke-width=".6"/></svg>
<div class="u " style="left:989.30px;top:74.84px;transform:scaleX(0.8996);">Threads</div>
<svg class="ic" style="left:1053.3px;top:72px;width:16px;height:16px" viewBox="0 0 16 16"><path d="M9 1.200l5.200-1 1.200 3.800-4 1.600z" fill="#B8BCC0" stroke="#7E8488" stroke-width=".7"/><circle cx="8.200" cy="9" r="6.200" fill="#F4F6F8" stroke="#A0A8B0" stroke-width=".8"/><circle cx="6.600" cy="7" r=".8" fill="#222"/><circle cx="10.400" cy="6.600" r=".8" fill="#222"/><path d="M.4 8.400l6.400.2-.4 2.200z" fill="#E83030"/><path d="M5.500 12q2.500 1.500 5.500-.6" fill="none" stroke="#444" stroke-width=".7"/></svg>
<div class="u " style="left:1071.60px;top:74.84px;transform:scaleX(0.8808);">Snowman</div>
<svg class="ic" style="left:1142.6px;top:72px;width:16px;height:16px" viewBox="0 0 16 16"><rect x="4.200" y=".5" width="6.600" height="7" rx="1.200" fill="#2F9AE4" stroke="#1C6EB4" stroke-width=".7"/><rect x=".5" y="6.800" width="7.200" height="8.400" rx="1.200" fill="#E02828" stroke="#A01414" stroke-width=".7"/><rect x="8" y="7.600" width="7.400" height="7.800" rx="1.200" fill="#58B83C" stroke="#357E20" stroke-width=".7"/></svg>
<div class="u " style="left:1161.50px;top:74.84px;transform:scaleX(0.8972);">Handles</div>
<!-- sidebar -->
<div class="abs" style="left:0px;top:92px;width:181px;height:457px;background:#FFF8F0;border:1px solid #808080;border-bottom:none;"></div>
<div class="abs" style="left:2px;top:93px;width:22px;height:11px;background:#4040FF;"></div>
<div class="t " style="left:2.4px;top:93.3px;color:#FFF;">EIP</div>
<svg class="abs" style="left:0;top:0;width:182px;height:549px" viewBox="0 0 182 549"><circle cx="173.5" cy="98.5" r="3" fill="#808080"/><circle cx="173.5" cy="109.5" r="3" fill="#808080"/><circle cx="173.5" cy="120.5" r="3" fill="#808080"/><circle cx="173.5" cy="131.5" r="3" fill="#808080"/><circle cx="173.5" cy="142.5" r="3" fill="#808080"/><circle cx="173.5" cy="153.5" r="3" fill="#808080"/><circle cx="173.5" cy="164.5" r="3" fill="#808080"/><circle cx="173.5" cy="175.5" r="3" fill="#808080"/><circle cx="173.5" cy="186.5" r="3" fill="#808080"/><circle cx="173.5" cy="197.5" r="3" fill="#808080"/><circle cx="173.5" cy="208.5" r="3" fill="#808080"/><circle cx="173.5" cy="219.5" r="3" fill="#808080"/><circle cx="173.5" cy="230.5" r="3" fill="#808080"/><circle cx="173.5" cy="241.5" r="3" fill="#808080"/><circle cx="173.5" cy="252.5" r="3" fill="#808080"/><circle cx="173.5" cy="263.5" r="3" fill="#808080"/><circle cx="173.5" cy="274.5" r="3" fill="#808080"/><circle cx="173.5" cy="285.5" r="3" fill="#808080"/><circle cx="173.5" cy="296.5" r="3" fill="#808080"/><circle cx="173.5" cy="307.5" r="3" fill="#808080"/><circle cx="173.5" cy="318.5" r="3" fill="#808080"/><circle cx="173.5" cy="329.5" r="3" fill="#808080"/><circle cx="173.5" cy="340.5" r="3" fill="#808080"/><circle cx="173.5" cy="351.5" r="3" fill="#808080"/><circle cx="173.5" cy="362.5" r="3" fill="#808080"/><circle cx="173.5" cy="373.5" r="3" fill="#808080"/><circle cx="173.5" cy="384.5" r="3" fill="#808080"/><circle cx="173.5" cy="395.5" r="3" fill="#808080"/><circle cx="173.5" cy="406.5" r="3" fill="#808080"/><circle cx="173.5" cy="417.5" r="3" fill="#808080"/><circle cx="173.5" cy="428.5" r="3" fill="#808080"/><circle cx="173.5" cy="439.5" r="3" fill="#808080"/><circle cx="173.5" cy="450.5" r="3" fill="#808080"/><circle cx="173.5" cy="461.5" r="3" fill="#808080"/><circle cx="173.5" cy="472.5" r="3" fill="#808080"/><circle cx="173.5" cy="483.5" r="3" fill="#808080"/><circle cx="173.5" cy="494.5" r="3" fill="#808080"/><circle cx="173.5" cy="505.5" r="3" fill="#808080"/><circle cx="173.5" cy="516.5" r="3" fill="#808080"/><circle cx="173.5" cy="527.5" r="3" fill="#808080"/><circle cx="173.5" cy="538.5" r="3" fill="#808080"/><circle cx="173.5" cy="549.5" r="3" fill="#808080"/><path d="M170 98.500H143.500V153.500H168" stroke="#808080" stroke-width="1" fill="none"/><path d="M164.500 150.500l3 3-3 3" stroke="#808080" stroke-width="1" fill="none"/><path d="M170 252.500H143.500V274.500H168" stroke="#808080" stroke-width="1" fill="none" stroke-dasharray="4 2"/><path d="M164.500 271.500l3 3-3 3" stroke="#808080" stroke-width="1" fill="none"/><path d="M24 98H142" stroke="#4040FF" stroke-width="2" fill="none"/><path d="M138.500 94l4.200 4-4.200 4" stroke="#4040FF" stroke-width="2" fill="none"/></svg>
<!-- disasm -->
<div class="abs" style="left:182px;top:92px;width:1162px;height:457px;background:#FFF8F0;border:1px solid #000;border-bottom:none;"></div>
<div class="abs" style="left:183px;top:467px;width:1143px;height:11px;background:#C0C0C0;"></div>
<div class="abs" style="left:183px;top:93px;width:63px;height:11px;background:#000000;"></div>
<div class="clip" style="left:183px;top:92px;width:63px;height:457px">
<div class="t " style="left:4px;top:1.3px;color:#FFF;">773DDB9C</div>
<div class="t " style="left:4px;top:12.3px;color:#808080;">773DDB9E</div>
<div class="t " style="left:4px;top:23.3px;color:#808080;">773DDBA0</div>
<div class="t " style="left:4px;top:34.3px;color:#808080;">773DDBA1</div>
<div class="t " style="left:4px;top:45.3px;color:#808080;">773DDBA2</div>
<div class="t " style="left:4px;top:56.3px;color:#808080;">773DDBA5</div>
<div class="t " style="left:4px;top:67.3px;color:#808080;">773DDBAC</div>
<div class="t " style="left:4px;top:78.3px;color:#808080;">773DDBB1</div>
<div class="t " style="left:4px;top:89.3px;color:#808080;">773DDBB2</div>
<div class="t " style="left:4px;top:100.3px;color:#808080;">773DDBB8</div>
<div class="t " style="left:4px;top:111.3px;color:#808080;">773DDBBA</div>
<div class="t " style="left:4px;top:122.3px;color:#808080;">773DDBC0</div>
<div class="t " style="left:4px;top:133.3px;color:#808080;">773DDBC6</div>
<div class="t " style="left:4px;top:144.3px;color:#808080;">773DDBC8</div>
<div class="t " style="left:4px;top:155.3px;color:#808080;">773DDBCB</div>
<div class="t " style="left:4px;top:166.3px;color:#808080;">773DDBCD</div>
<div class="t " style="left:4px;top:177.3px;color:#808080;">773DDBD2</div>
<div class="t " style="left:4px;top:188.3px;color:#808080;">773DDBD4</div>
<div class="t " style="left:4px;top:199.3px;color:#808080;">773DDBD5</div>
<div class="t " style="left:4px;top:210.3px;color:#808080;">773DDBD7</div>
<div class="t " style="left:4px;top:221.3px;color:#808080;">773DDBD8</div>
<div class="t " style="left:4px;top:232.3px;color:#808080;">773DDBDA</div>
<div class="t " style="left:4px;top:243.3px;color:#808080;">773DDBDD</div>
<div class="t " style="left:4px;top:254.3px;color:#808080;">773DDBE3</div>
<div class="t " style="left:4px;top:265.3px;color:#808080;">773DDBE8</div>
<div class="t " style="left:4px;top:276.3px;color:#808080;">773DDBEA</div>
<div class="t " style="left:4px;top:287.3px;color:#808080;">773DDBF1</div>
<div class="t " style="left:4px;top:298.3px;color:#808080;">773DDBF2</div>
<div class="t " style="left:4px;top:309.3px;color:#808080;">773DDBF8</div>
<div class="t " style="left:4px;top:320.3px;color:#808080;">773DDBF9</div>
<div class="t " style="left:4px;top:331.3px;color:#808080;">773DDBFB</div>
<div class="t " style="left:4px;top:342.3px;color:#808080;">773DDBFC</div>
<div class="t " style="left:4px;top:353.3px;color:#808080;">773DDC01</div>
<div class="t " style="left:4px;top:364.3px;color:#808080;">773DDC03</div>
<div class="t " style="left:4px;top:375.3px;color:#000;">773DDC05</div>
<div class="t " style="left:4px;top:386.3px;color:#808080;">773DDC06</div>
<div class="t " style="left:4px;top:397.3px;color:#808080;">773DDC0B</div>
<div class="t " style="left:4px;top:408.3px;color:#808080;">773DDC0F</div>
<div class="t " style="left:4px;top:419.3px;color:#808080;">773DDC13</div>
<div class="t " style="left:4px;top:430.3px;color:#808080;">773DDC15</div>
<div class="t " style="left:4px;top:441.3px;color:#808080;">773DDC1D</div>
<div class="t " style="left:4px;top:452.3px;color:#808080;">773DDC25</div>
</div>
<div class="clip" style="left:247px;top:92px;width:175px;height:457px">
<div class="t " style="left:32.39999999999998px;top:1.3px;">EB 07</div>
<svg class="abs" style="left:16px;top:4px;width:7px;height:5px" viewBox="0 0 7 5"><path d="M1 1l2.500 2.800L6 1" stroke="#FF0000" stroke-width="1" fill="none"/></svg>
<div class="t " style="left:32.39999999999998px;top:12.3px;">33 C0</div>
<div class="t " style="left:32.39999999999998px;top:23.3px;">40</div>
<div class="t " style="left:32.39999999999998px;top:34.3px;">C3</div>
<div class="t " style="left:32.39999999999998px;top:45.3px;">8B 65 E8</div>
<div class="t " style="left:32.39999999999998px;top:56.3px;">C7 45 FC FE FF FF FF</div>
<div class="t " style="left:32.39999999999998px;top:67.3px;">E8 D8 79 FD FF</div>
<div class="t " style="left:32.39999999999998px;top:78.3px;">C3</div>
<div class="t " style="left:32.39999999999998px;top:89.3px;">64 A1 30 00 00 00</div>
<div class="t " style="left:32.39999999999998px;top:100.3px;">33 C9</div>
<div class="t " style="left:32.39999999999998px;top:111.3px;">89 0D 1C 86 44 77</div>
<div class="t " style="left:32.39999999999998px;top:122.3px;">89 0D 20 86 44 77</div>
<div class="t " style="left:32.39999999999998px;top:133.3px;">88 08</div>
<div class="t " style="left:32.39999999999998px;top:144.3px;">38 48 02</div>
<div class="t " style="left:32.39999999999998px;top:155.3px;">74 05</div>
<svg class="abs" style="left:16px;top:158px;width:7px;height:5px" viewBox="0 0 7 5"><path d="M1 1l2.500 2.800L6 1" stroke="#FF0000" stroke-width="1" fill="none"/></svg>
<div class="t " style="left:32.39999999999998px;top:166.3px;">E8 9E FF FF FF</div>
<div class="t " style="left:32.39999999999998px;top:177.3px;">33 C0</div>
<div class="t " style="left:32.39999999999998px;top:188.3px;">C3</div>
<div class="t " style="left:32.39999999999998px;top:199.3px;">8B FF</div>
<div class="t " style="left:32.39999999999998px;top:210.3px;">55</div>
<div class="t " style="left:32.39999999999998px;top:221.3px;">8B EC</div>
<div class="t " style="left:32.39999999999998px;top:232.3px;">83 E4 F8</div>
<div class="t " style="left:32.39999999999998px;top:243.3px;">81 EC 70 01 00 00</div>
<div class="t " style="left:32.39999999999998px;top:254.3px;">A1 44 D3 44 77</div>
<div class="t " style="left:32.39999999999998px;top:265.3px;">33 C4</div>
<div class="t " style="left:32.39999999999998px;top:276.3px;">89 84 24 6C 01 00 00</div>
<div class="t " style="left:32.39999999999998px;top:287.3px;">56</div>
<div class="t " style="left:32.39999999999998px;top:298.3px;">8B 35 EC 91 44 77</div>
<div class="t " style="left:32.39999999999998px;top:309.3px;">57</div>
<div class="t " style="left:32.39999999999998px;top:320.3px;">6A 16</div>
<div class="t " style="left:32.39999999999998px;top:331.3px;">58</div>
<div class="t " style="left:32.39999999999998px;top:342.3px;">66 89 44 24 10</div>
<div class="t " style="left:32.39999999999998px;top:353.3px;">8B F9</div>
<div class="t " style="left:32.39999999999998px;top:364.3px;">6A 18</div>
<div class="t " style="left:32.39999999999998px;top:375.3px;">58</div>
<div class="t " style="left:32.39999999999998px;top:386.3px;">66 89 44 24 12</div>
<div class="t " style="left:32.39999999999998px;top:397.3px;">8D 44 24 70</div>
<div class="t " style="left:32.39999999999998px;top:408.3px;">89 44 24 6C</div>
<div class="t " style="left:32.39999999999998px;top:419.3px;">33 C0</div>
<div class="t " style="left:32.39999999999998px;top:430.3px;">C7 44 24 14 90 4A 33 77</div>
<div class="t " style="left:32.39999999999998px;top:441.3px;">C7 44 24 68 00 00 00 01</div>
<div class="t " style="left:32.39999999999998px;top:452.3px;">66 89 44 24 70</div>
</div>
<div class="clip" style="left:423px;top:92px;width:279px;height:457px">
<div class="t tl" style="left:4px;top:1px;"><span class="jm">jmp</span> <span class="ad">ntdll.773DDBA5</span></div>
<div class="t tl" style="left:4px;top:12px;">xor <span class="r">eax</span>,<span class="r">eax</span></div>
<div class="t tl" style="left:4px;top:23px;">inc <span class="r">eax</span></div>
<div class="t tl" style="left:4px;top:34px;"><span class="cl">ret</span></div>
<div class="t tl" style="left:4px;top:45px;">mov <span class="r">esp</span>,<span class="sz">dword ptr</span> <span class="sg">ss</span>:<span class="bk">[</span><span class="br">ebp</span><span class="op">-</span><span class="v">18</span><span class="bk">]</span></div>
<div class="t tl" style="left:4px;top:56px;">mov <span class="sz">dword ptr</span> <span class="sg">ss</span>:<span class="bk">[</span><span class="br">ebp</span><span class="op">-</span><span class="v">4</span><span class="bk">]</span>,<span class="v">FFFFFFFE</span></div>
<div class="t tl" style="left:4px;top:67px;"><span class="cl">call</span> <span class="ad">ntdll.773B5589</span></div>
<div class="t tl" style="left:4px;top:78px;"><span class="cl">ret</span></div>
<div class="t tl" style="left:4px;top:89px;">mov <span class="r">eax</span>,<span class="sz">dword ptr</span> <span class="sg">fs</span>:[<span class="v">30</span>]</div>
<div class="t tl" style="left:4px;top:100px;">xor <span class="r">ecx</span>,<span class="r">ecx</span></div>
<div class="t tl" style="left:4px;top:111px;">mov <span class="sz">dword ptr</span> <span class="sg">ds</span>:[<span class="ad">7744861C</span>],<span class="r">ecx</span></div>
<div class="t tl" style="left:4px;top:122px;">mov <span class="sz">dword ptr</span> <span class="sg">ds</span>:[<span class="ad">77448620</span>],<span class="r">ecx</span></div>
<div class="t tl" style="left:4px;top:133px;">mov <span class="sz">byte ptr</span> <span class="sg">ds</span>:[<span class="br">eax</span>],<span class="r">cl</span></div>
<div class="t tl" style="left:4px;top:144px;">cmp <span class="sz">byte ptr</span> <span class="sg">ds</span>:[<span class="br">eax</span><span class="op">+</span><span class="v">2</span>],<span class="r">cl</span></div>
<div class="t tl" style="left:4px;top:155px;"><span class="jc">je</span> <span class="ad">ntdll.773DDBD2</span></div>
<div class="t tl" style="left:4px;top:166px;"><span class="cl">call</span> <span class="ad">ntdll.773DDB70</span></div>
<div class="t tl" style="left:4px;top:177px;">xor <span class="r">eax</span>,<span class="r">eax</span></div>
<div class="t tl" style="left:4px;top:188px;"><span class="cl">ret</span></div>
<div class="t tl" style="left:4px;top:199px;"><span class="g">mov edi,edi</span></div>
<div class="t tl" style="left:4px;top:210px;"><span class="pp">push</span> <span class="r">ebp</span></div>
<div class="t tl" style="left:4px;top:221px;">mov <span class="r">ebp</span>,<span class="r">esp</span></div>
<div class="t tl" style="left:4px;top:232px;">and <span class="r">esp</span>,<span class="v">FFFFFFF8</span></div>
<div class="t tl" style="left:4px;top:243px;">sub <span class="r">esp</span>,<span class="v">170</span></div>
<div class="t tl" style="left:4px;top:254px;">mov <span class="r">eax</span>,<span class="sz">dword ptr</span> <span class="sg">ds</span>:[<span class="ad">7744D344</span>]</div>
<div class="t tl" style="left:4px;top:265px;">xor <span class="r">eax</span>,<span class="r">esp</span></div>
<div class="t tl" style="left:4px;top:276px;">mov <span class="sz">dword ptr</span> <span class="sg">ss</span>:<span class="bk">[</span><span class="br">esp</span><span class="op">+</span><span class="v">16C</span><span class="bk">]</span>,<span class="r">eax</span></div>
<div class="t tl" style="left:4px;top:287px;"><span class="pp">push</span> <span class="r">esi</span></div>
<div class="t tl" style="left:4px;top:298px;">mov <span class="r">esi</span>,<span class="sz">dword ptr</span> <span class="sg">ds</span>:[<span class="ad">774491EC</span>]</div>
<div class="t tl" style="left:4px;top:309px;"><span class="pp">push</span> <span class="r">edi</span></div>
<div class="t tl" style="left:4px;top:320px;"><span class="pp">push</span> <span class="v">16</span></div>
<div class="t tl" style="left:4px;top:331px;"><span class="pp">pop</span> <span class="r">eax</span></div>
<div class="t tl" style="left:4px;top:342px;">mov <span class="sz">word ptr</span> <span class="sg">ss</span>:<span class="bk">[</span><span class="br">esp</span><span class="op">+</span><span class="v">10</span><span class="bk">]</span>,<span class="r">ax</span></div>
<div class="t tl" style="left:4px;top:353px;">mov <span class="r">edi</span>,<span class="r">ecx</span></div>
<div class="t tl" style="left:4px;top:364px;"><span class="pp">push</span> <span class="v">18</span></div>
<div class="t tl" style="left:4px;top:375px;"><span class="pp">pop</span> <span class="r">eax</span></div>
<div class="t tl" style="left:4px;top:386px;">mov <span class="sz">word ptr</span> <span class="sg">ss</span>:<span class="bk">[</span><span class="br">esp</span><span class="op">+</span><span class="v">12</span><span class="bk">]</span>,<span class="r">ax</span></div>
<div class="t tl" style="left:4px;top:397px;">lea <span class="r">eax</span>,<span class="sz">dword ptr</span> <span class="sg">ss</span>:<span class="bk">[</span><span class="br">esp</span><span class="op">+</span><span class="v">70</span><span class="bk">]</span></div>
<div class="t tl" style="left:4px;top:408px;">mov <span class="sz">dword ptr</span> <span class="sg">ss</span>:<span class="bk">[</span><span class="br">esp</span><span class="op">+</span><span class="v">6C</span><span class="bk">]</span>,<span class="r">eax</span></div>
<div class="t tl" style="left:4px;top:419px;">xor <span class="r">eax</span>,<span class="r">eax</span></div>
<div class="t tl" style="left:4px;top:430px;">mov <span class="sz">dword ptr</span> <span class="sg">ss</span>:<span class="bk">[</span><span class="br">esp</span><span class="op">+</span><span class="v">14</span><span class="bk">]</span>,<span class="v">ntdll.77334A90</span></div>
<div class="t tl" style="left:4px;top:441px;">mov <span class="sz">dword ptr</span> <span class="sg">ss</span>:<span class="bk">[</span><span class="br">esp</span><span class="op">+</span><span class="v">68</span><span class="bk">]</span>,<span class="v">1000000</span></div>
<div class="t tl" style="left:4px;top:452px;">mov <span class="sz">word ptr</span> <span class="sg">ss</span>:<span class="bk">[</span><span class="br">esp</span><span class="op">+</span><span class="v">70</span><span class="bk">]</span>,<span class="r">ax</span></div>
</div>
<div class="clip" style="left:703px;top:92px;width:624px;height:457px">
<div class="t tl" style="left:3.5px;top:199px;"><span class="cm">edi:"LdrpInitializeProcess"</span></div>
<div class="t tl" style="left:3.5px;top:309px;"><span class="cm">edi:"LdrpInitializeProcess"</span></div>
<div class="t tl" style="left:3.5px;top:353px;"><span class="cm">edi:"LdrpInitializeProcess"</span></div>
<div class="t tl" style="left:3.5px;top:408px;">[esp+6C]:</div>
<div class="t tl" style="left:3.5px;top:430px;"><span class="cm">77334A90:L"apphelp.dll"</span></div>
</div>
<div class="abs" style="left:246px;top:93px;width:1px;height:456px;background:#808080;"></div>
<div class="abs" style="left:422px;top:93px;width:1px;height:456px;background:#808080;"></div>
<div class="abs" style="left:702px;top:93px;width:1px;height:456px;background:#808080;"></div>
<div class="abs" style="left:1327px;top:93px;width:16px;height:456px;background:#F0F0F0;"></div>
<div class="abs" style="left:1327px;top:436px;width:16px;height:18px;background:#CDCDCD;"></div>
<svg class="abs" style="left:1327px;top:93px;width:16px;height:17px" viewBox="0 0 16 17"><path d="M4.500 11.300L8 7.800l3.500 3.500" stroke="#606060" stroke-width="1.500" fill="none"/></svg>
<!-- regs -->
<div class="abs" style="left:1346px;top:94px;width:573px;height:18px;background:#E1E1E1;border:1px solid #ADADAD;"></div>
<div class="t tr" style="left:1356px;top:97px;">Hide FPU</div>
<div class="abs" style="left:1345px;top:113px;width:575px;height:436px;background:#FFF8F0;border:1px solid #828790;border-bottom:none;"></div>
<div class="abs" style="left:1395px;top:118px;width:56px;height:12px;background:#EDEDED;"></div>
<div class="t t2 tr" style="left:1353px;top:118.9px;">EAX   00000000</div>
<div class="t t2 tr" style="left:1353px;top:130.9px;">EBX   <span class="rd">00326000</span></div>
<div class="t t2 tr" style="left:1353px;top:142.9px;">ECX   <span class="rd">E82E0000</span></div>
<div class="t t2 tr" style="left:1353px;top:154.9px;">EDX   00000000</div>
<div class="t t2 tr" style="left:1353px;top:166.9px;">EBP   <span class="rd">0019FA68</span></div>
<div class="t t2 tr" style="left:1353px;top:178.9px;">ESP   <span class="rd">0019FA3C</span></div>
<div class="t t2 tr" style="left:1353px;top:190.9px;">ESI   <span class="rd">00572AE0</span></div>
<div class="t t2 tr" style="left:1353px;top:202.9px;">EDI   <span class="rd">77336BAC</span>     "LdrpInitializeProcess"</div>
<div class="t t2 tr" style="left:1353px;top:226.9px;">EIP   <span class="rd">773DDB9C</span>     ntdll.773DDB9C</div>
<div class="t t2 tr" style="left:1353px;top:250.9px;">EFLAGS   <span class="rd">00000246</span></div>
<div class="t t2 tr" style="left:1353px;top:262.9px;">ZF <span class="rd">1</span>  PF 1  AF 0</div>
<div class="t t2 tr" style="left:1353px;top:274.9px;">OF 0  SF 0  DF 0</div>
<div class="t t2 tr" style="left:1353px;top:286.9px;">CF 0  TF 0  IF 1</div>
<div class="t t2 tr" style="left:1353px;top:310.9px;">LastError <span class="rd">00000032 (ERROR_NOT_SUPPORTED)</span></div>
<div class="t t2 tr" style="left:1353px;top:334.9px;">GS 002B  FS 0053</div>
<div class="t t2 tr" style="left:1353px;top:346.9px;">ES 002B  DS 002B</div>
<div class="t t2 tr" style="left:1353px;top:358.9px;">CS 0023  SS 002B</div>
<div class="t t2 tr" style="left:1353px;top:382.9px;">x87r0 00000000000000000000 ST0 Empty 0.000000000000000000</div>
<div class="t t2 tr" style="left:1353px;top:394.9px;">x87r1 00000000000000000000 ST1 Empty 0.000000000000000000</div>
<div class="t t2 tr" style="left:1353px;top:406.9px;">x87r2 00000000000000000000 ST2 Empty 0.000000000000000000</div>
<div class="t t2 tr" style="left:1353px;top:418.9px;">x87r3 00000000000000000000 ST3 Empty 0.000000000000000000</div>
<div class="t t2 tr" style="left:1353px;top:430.9px;">x87r4 00000000000000000000 ST4 Empty 0.000000000000000000</div>
<div class="t t2 tr" style="left:1353px;top:442.9px;">x87r5 00000000000000000000 ST5 Empty 0.000000000000000000</div>
<div class="t t2 tr" style="left:1353px;top:454.9px;">x87r6 00000000000000000000 ST6 Empty 0.000000000000000000</div>
<div class="t t2 tr" style="left:1353px;top:466.9px;">x87r7 00000000000000000000 ST7 Empty 0.000000000000000000</div>
<div class="t t2 tr" style="left:1353px;top:490.9px;">x87TagWord FFFF</div>
<div class="t t2 tr" style="left:1353px;top:502.9px;">x87TW_0 3 (Empty)   x87TW_1 3 (Empty)</div>
<div class="t t2 tr" style="left:1353px;top:514.9px;">x87TW_2 3 (Empty)   x87TW_3 3 (Empty)</div>
<div class="t t2 tr" style="left:1353px;top:526.9px;">x87TW_4 3 (Empty)   x87TW_5 3 (Empty)</div>
<div class="t t2 tr" style="left:1353px;top:538.9px;">x87TW_6 3 (Empty)   x87TW_7 3 (Empty)</div>
<div class="abs" style="left:1910px;top:114px;width:10px;height:435px;background:#F5F5F5;border-left:1px solid #787878;border-right:1px solid #787878;"></div>
<div class="abs" style="left:1911px;top:114px;width:8px;height:245px;background:#FFFFFF;"></div>
<div class="abs" style="left:1912px;top:115px;width:6px;height:243px;background:#A6A6A6;"></div>
</body></html>
